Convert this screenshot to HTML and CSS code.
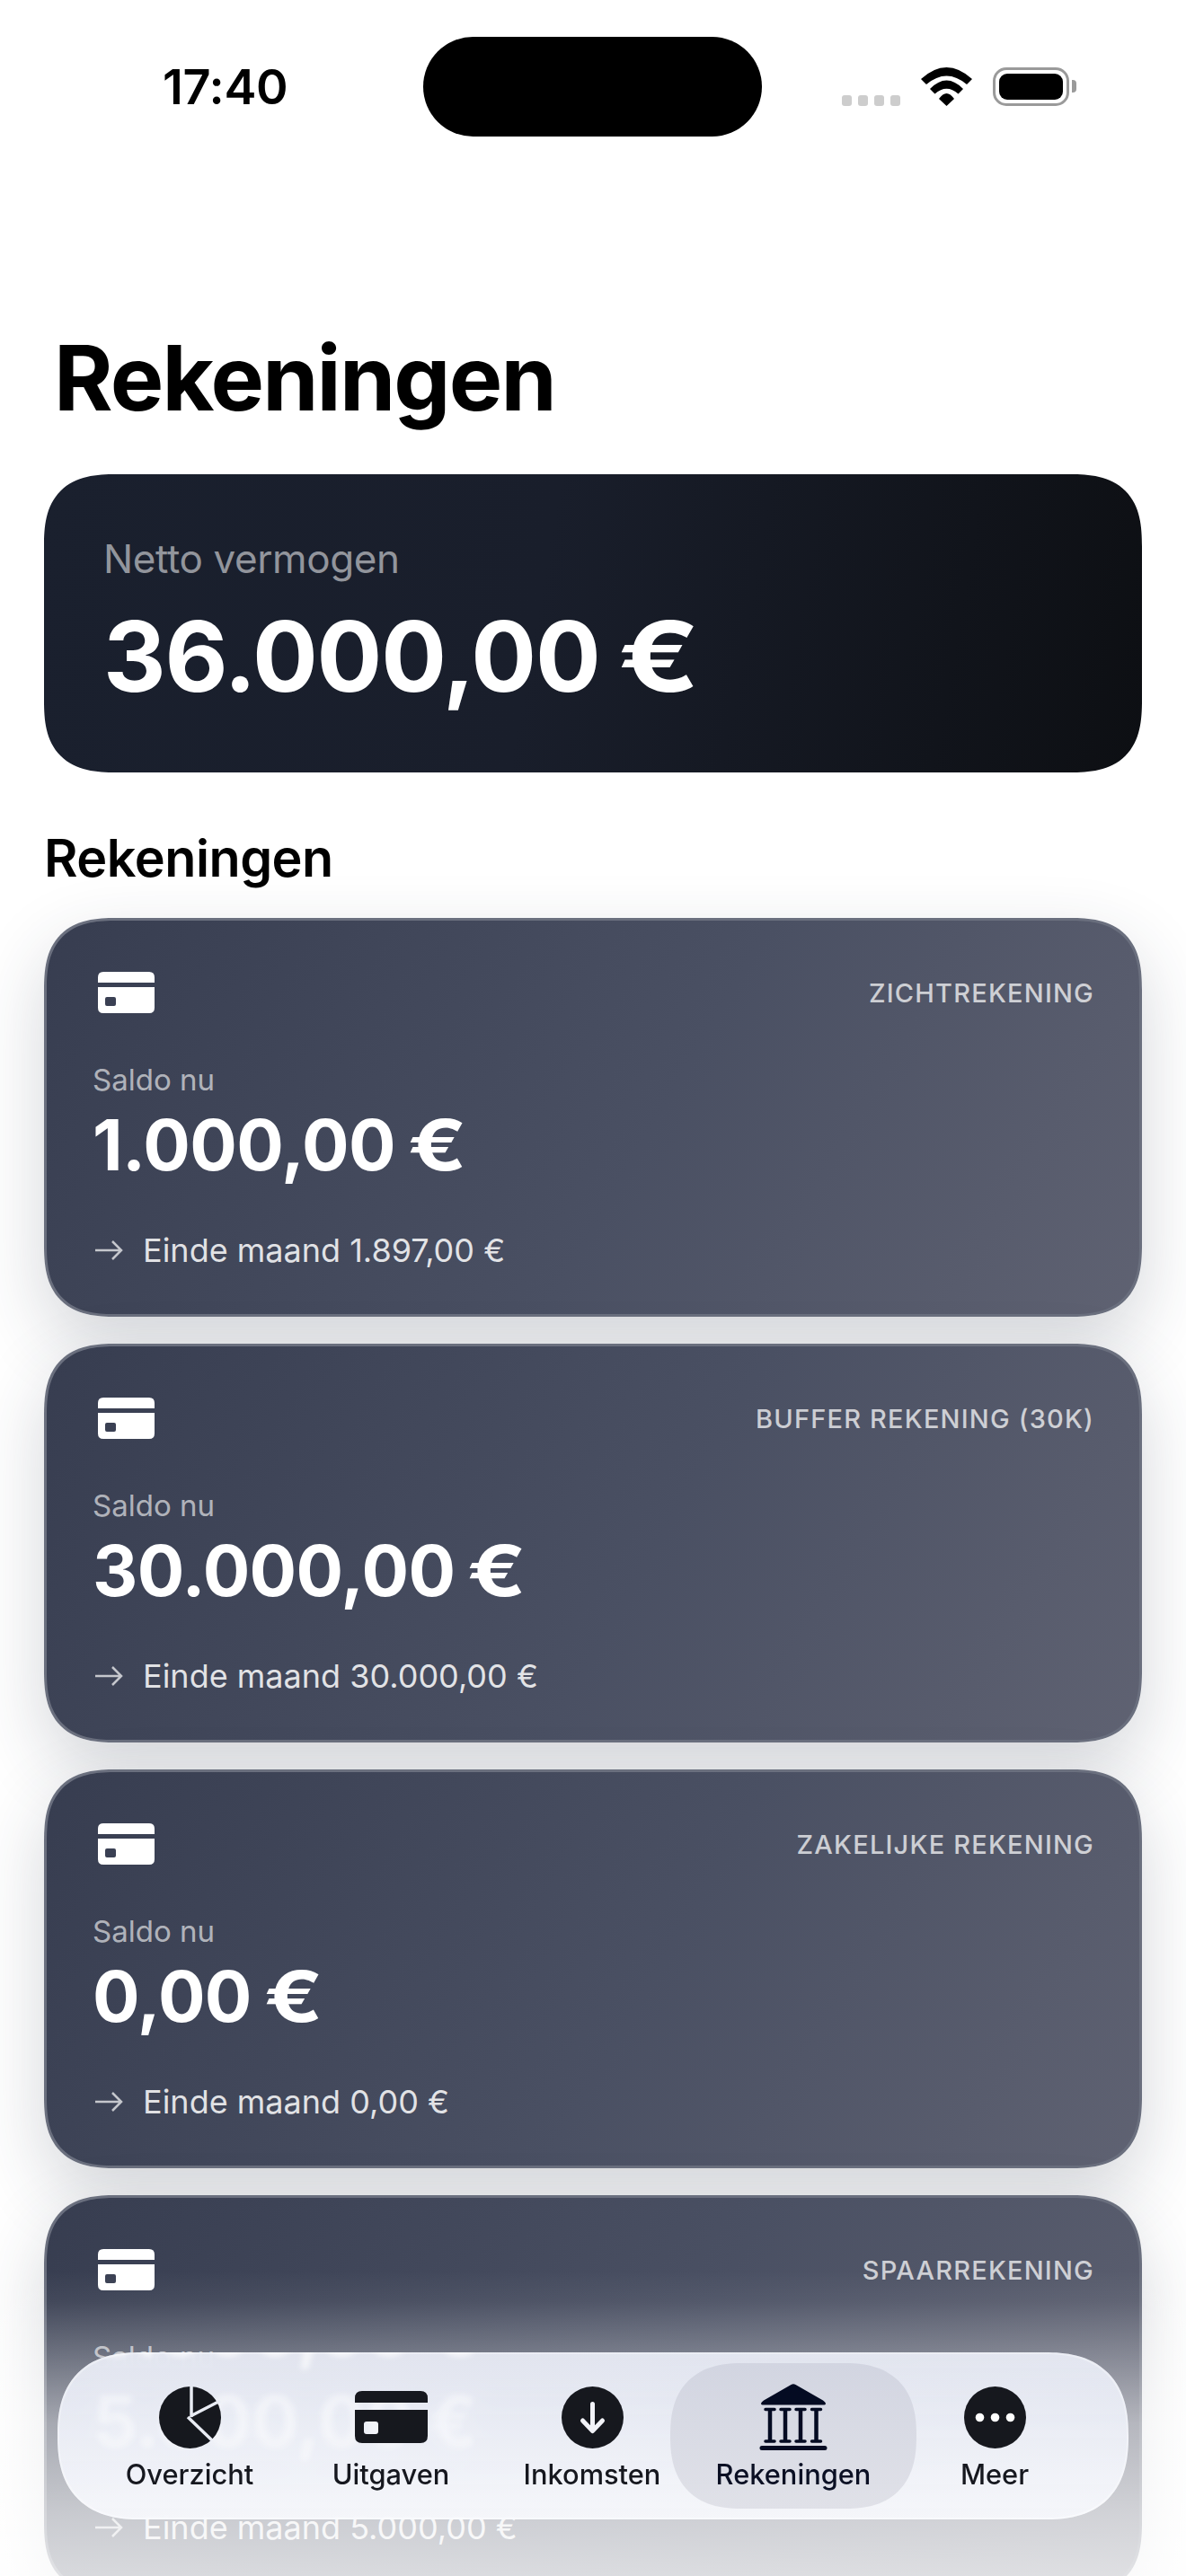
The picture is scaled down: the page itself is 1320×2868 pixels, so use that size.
FILE: index.html
```html
<!DOCTYPE html>
<html lang="nl">
<head>
<meta charset="utf-8">
<title>Rekeningen</title>
<link rel="stylesheet" href="styles.css">
</head>
<body>
<div class="phone">
  <header class="status">
    <span class="time">17:40</span>
    <span class="island"></span>
    <div class="status-icons">
      <span class="signal"><i></i><i></i><i></i><i></i></span>
      <svg class="wifi" viewBox="0 0 57 43"><path d="M0 13Q28.500-13 57 13L51 19Q28.500-0 6 19ZM10 24Q28.500 5 47 24L41.500 29.500Q28.500 18 15.500 29.500ZM20 35Q28.500 23 37 35L28.500 43Z"/></svg>
      <span class="battery"><span class="battery-fill"></span></span>
      <span class="battery-tip"></span>
    </div>
  </header>

  <main class="content">
    <h1 class="title">Rekeningen</h1>
    <section class="hero">
      <div class="hero-label">Netto vermogen</div>
      <div class="hero-amount">36.000,00 <span class="eur">€</span></div>
    </section>
    <h2 class="subtitle">Rekeningen</h2>
    <div class="cards">
      <article class="card">
        <div class="card-top">
          <svg class="card-icon" viewBox="0 0 63 46"><path fill-rule="evenodd" d="M0 12V6Q0 0 6 0H57Q63 0 63 6V12ZM0 17H63V40Q63 46 57 46H6Q0 46 0 40ZM10 28Q8 28 8 30V36Q8 38 10 38H18Q20 38 20 36V30Q20 28 18 28Z"/></svg>
          <span class="card-type">ZICHTREKENING</span>
        </div>
        <div class="saldo">Saldo nu</div>
        <div class="amount">1.000,00 <span class="eur">€</span></div>
        <div class="forecast"><svg class="arrow" viewBox="0 0 32 24"><path d="M1 12H30M20 2L30 12L20 22"/></svg>Einde maand 1.897,00 €</div>
      </article>
      <article class="card">
        <div class="card-top">
          <svg class="card-icon" viewBox="0 0 63 46"><path fill-rule="evenodd" d="M0 12V6Q0 0 6 0H57Q63 0 63 6V12ZM0 17H63V40Q63 46 57 46H6Q0 46 0 40ZM10 28Q8 28 8 30V36Q8 38 10 38H18Q20 38 20 36V30Q20 28 18 28Z"/></svg>
          <span class="card-type">BUFFER REKENING (30K)</span>
        </div>
        <div class="saldo">Saldo nu</div>
        <div class="amount">30.000,00 <span class="eur">€</span></div>
        <div class="forecast"><svg class="arrow" viewBox="0 0 32 24"><path d="M1 12H30M20 2L30 12L20 22"/></svg>Einde maand 30.000,00 €</div>
      </article>
      <article class="card">
        <div class="card-top">
          <svg class="card-icon" viewBox="0 0 63 46"><path fill-rule="evenodd" d="M0 12V6Q0 0 6 0H57Q63 0 63 6V12ZM0 17H63V40Q63 46 57 46H6Q0 46 0 40ZM10 28Q8 28 8 30V36Q8 38 10 38H18Q20 38 20 36V30Q20 28 18 28Z"/></svg>
          <span class="card-type">ZAKELIJKE REKENING</span>
        </div>
        <div class="saldo">Saldo nu</div>
        <div class="amount">0,00 <span class="eur">€</span></div>
        <div class="forecast"><svg class="arrow" viewBox="0 0 32 24"><path d="M1 12H30M20 2L30 12L20 22"/></svg>Einde maand 0,00 €</div>
      </article>
      <article class="card">
        <div class="card-top">
          <svg class="card-icon" viewBox="0 0 63 46"><path fill-rule="evenodd" d="M0 12V6Q0 0 6 0H57Q63 0 63 6V12ZM0 17H63V40Q63 46 57 46H6Q0 46 0 40ZM10 28Q8 28 8 30V36Q8 38 10 38H18Q20 38 20 36V30Q20 28 18 28Z"/></svg>
          <span class="card-type">SPAARREKENING</span>
        </div>
        <div class="saldo">Saldo nu</div>
        <div class="amount">5.000,00 <span class="eur">€</span></div>
        <div class="forecast"><svg class="arrow" viewBox="0 0 32 24"><path d="M1 12H30M20 2L30 12L20 22"/></svg>Einde maand 5.000,00 €</div>
      </article>
    </div>
  </main>

  <div class="fade"></div>

  <nav class="tabbar">
    <span class="ghost ghost-main"></span>
    <span class="ghost ghost-top"></span>
    <span class="ghost ghost-bottom"></span>
    <a class="tab">
      <span class="tab-icon">
        <svg class="ic-pie" viewBox="0 0 69 69"><circle cx="34.500" cy="34.500" r="34.500" class="ink"/><path class="cut" d="M36 0V34M35 33L68 16M32 34L59 60"/></svg>
      </span>
      <span class="tab-label">Overzicht</span>
    </a>
    <a class="tab">
      <span class="tab-icon">
        <svg class="ic-card" viewBox="0 0 81 58"><path class="ink" fill-rule="evenodd" d="M0 13V8Q0 0 8 0H73Q81 0 81 8V13ZM0 21H81V50Q81 58 73 58H8Q0 58 0 50ZM13 34Q10 34 10 37V45Q10 48 13 48H23Q26 48 26 45V37Q26 34 23 34Z"/></svg>
      </span>
      <span class="tab-label">Uitgaven</span>
    </a>
    <a class="tab">
      <span class="tab-icon">
        <svg class="ic-pie" viewBox="0 0 69 69"><circle cx="34.500" cy="34.500" r="34.500" class="ink"/><path class="glyph" d="M34.500 19.500V49M23.500 38L34.500 49.500L45.500 38"/></svg>
      </span>
      <span class="tab-label">Inkomsten</span>
    </a>
    <a class="tab tab-active">
      <span class="tab-icon">
        <svg class="ic-bank" viewBox="0 0 76 74"><path class="bank" d="M35.500 1Q38-.5 40.500 1L71 18.500Q74 20.500 74 22Q74 23.500 71 23.500H5Q2 23.500 2 22Q2 20.500 5 18.500ZM3 69H73Q75.500 69 75.500 71.500Q75.500 74 73 74H3Q.5 74 .5 71.500Q.5 69 3 69Z"/><path class="bank-stems" d="M12 28V64M29 28V64M46 28V64M63.500 28V64"/><path class="bank-caps" d="M7 28.500H17M24 28.500H34M41 28.500H51M58.500 28.500H68.500M7 64H17M24 64H34M41 64H51M58.500 64H68.500"/></svg>
      </span>
      <span class="tab-label">Rekeningen</span>
    </a>
    <a class="tab">
      <span class="tab-icon">
        <svg class="ic-pie" viewBox="0 0 69 69"><circle cx="34.500" cy="34.500" r="34.500" class="ink"/><circle cx="17.500" cy="34.500" r="4.800" fill="#fff"/><circle cx="34.500" cy="34.500" r="4.800" fill="#fff"/><circle cx="51.500" cy="34.500" r="4.800" fill="#fff"/></svg>
      </span>
      <span class="tab-label">Meer</span>
    </a>
  </nav>
</div>
</body>
</html>
```
FILE: styles.css
```css
* { box-sizing: border-box; }
html, body { margin: 0; padding: 0; background: #fff; }
body { font-family: Inter, "Liberation Sans", sans-serif; color: #000; }

.phone { position: relative; width: 1320px; height: 2868px; overflow: hidden; background: #fff; }

/* status bar */
.status { display: flex; align-items: flex-start; height: 152px; padding: 41px 122px 0 181px; }
.time { width: 291px; margin-top: 27px; font-size: 54px; line-height: 58px; font-weight: 600; letter-spacing: -0.3px; }
.island { width: 378px; height: 111px; border-radius: 56px; background: #000; }
.status-icons { display: flex; align-items: flex-start; margin-left: 89px; margin-top: 34px; }
.signal { display: flex; gap: 7px; margin-top: 31px; margin-right: 23px; }
.signal i { width: 11px; height: 12px; border-radius: 3px; background: #cdcdcd; }
.wifi { width: 57px; height: 43px; margin-right: 23px; fill: #000; }
.battery { display: block; width: 85px; height: 43px; padding: 4px; border: 3px solid #9a9a9a; border-radius: 15px; }
.battery-fill { display: block; width: 100%; height: 100%; border-radius: 9px; background: #000; }
.battery-tip { width: 5px; height: 14px; margin: 14px 0 0 3px; border-radius: 0 4px 4px 0; background: #9a9a9a; }

/* content */
.content { padding: 0 49px; }
.title { margin: 210px 0 0 11px; font-size: 100px; line-height: 118px; font-weight: 700; letter-spacing: -1.8px; }
.hero {
  height: 332px; margin-top: 48px; padding: 66px 66px 0;
  border-radius: 80px; corner-shape: superellipse(1.4);
  background: linear-gradient(100deg, #1a202e 0%, #191e2b 45%, #0d0f13 100%);
}
.hero-label { font-size: 44px; line-height: 56px; letter-spacing: -0.4px; color: #92959c; }
.hero-amount { margin-top: 20px; font-size: 108px; line-height: 122px; font-weight: 700; color: #fff; letter-spacing: -1.2px; word-spacing: -4px; }
.eur { display: inline-block; transform: scaleX(1.23); transform-origin: left center; }
.subtitle { margin: 60px 0 0 0; font-size: 57.500px; line-height: 70px; font-weight: 600; letter-spacing: -0.5px; }

.cards { display: flex; flex-direction: column; gap: 30px; margin-top: 32px; }
.card {
  height: 444px; padding: 57px 50px 0 51px;
  border: 3px solid #6a6f7e;
  border-radius: 80px; corner-shape: superellipse(1.4);
  background: linear-gradient(120deg, #373d50 0%, #4a5063 55%, #5f6272 100%);
  box-shadow: 0 30px 80px rgba(40, 48, 70, .2);
  color: #fff;
}
.card-top { display: flex; align-items: center; justify-content: space-between; height: 46px; padding-left: 6px; }
.card-icon { width: 63px; height: 46px; fill: #fff; }
.card-type { font-size: 29px; font-weight: 500; letter-spacing: 1.2px; color: rgba(255, 255, 255, .72); }
.saldo { margin-top: 54px; font-size: 33px; line-height: 40px; color: rgba(255, 255, 255, .62); }
.amount { margin-top: 7px; font-size: 78px; line-height: 92px; font-weight: 700; letter-spacing: -.6px; word-spacing: -4px; }
.forecast { display: flex; align-items: center; margin-top: 49px; font-size: 36px; line-height: 44px; color: rgba(255, 255, 255, .85); }
.arrow { width: 32px; height: 24px; margin: 0 22px 0 2px; fill: none; stroke: rgba(255, 255, 255, .7); stroke-width: 2.500; }

/* bottom fade */
.fade {
  position: absolute; left: 0; right: 0; bottom: 0; height: 340px; pointer-events: none;
  background: linear-gradient(180deg, rgba(255,255,255,0) 0%, rgba(255,255,255,.05) 10%, rgba(255,255,255,.26) 27%, rgba(255,255,255,.55) 50%, rgba(255,255,255,.72) 80%, rgba(255,255,255,.8) 100%);
}

/* tab bar */
.tabbar {
  position: absolute; left: 64px; top: 2619px; width: 1192px; height: 186px;
  display: grid; grid-template-columns: repeat(5, 1fr); padding: 12px 37px 12px 35px;
  border-radius: 93px; corner-shape: superellipse(1.3); overflow: hidden;
  background: linear-gradient(180deg, rgba(232,235,245,.94) 0%, rgba(233,236,245,.96) 30%, rgba(246,247,251,.98) 100%);
  box-shadow: inset 0 0 0 2px rgba(255,255,255,.3);
  backdrop-filter: blur(14px);
}
.ghost { position: absolute; left: 39px; font-size: 78px; line-height: 92px; font-weight: 700; color: rgba(255,255,255,.42); filter: blur(3px); white-space: nowrap; }
.ghost::before { content: "5.000,00 €"; }
.ghost-main { top: 31px; }
.ghost-top { top: -70px; color: rgba(255,255,255,.65); }
.ghost-bottom { top: 170px; color: rgba(255,255,255,.4); }
.tab { position: relative; display: flex; flex-direction: column; align-items: center; padding-top: 23px; color: #16181f; }
.tab-active { margin: 0 -25px; border-radius: 81px; corner-shape: superellipse(1.3); color: #0b1024; background: linear-gradient(180deg, #d2d5e1 0%, #e0e1e8 100%); }
.tab-icon { display: flex; align-items: center; justify-content: center; height: 74px; }
.tab-label { margin-top: 7px; font-size: 30.800px; line-height: 40px; font-weight: 500; }
.ic-pie { width: 69px; height: 69px; }
.ic-card { width: 81px; height: 58px; }
.ic-bank { width: 76px; height: 74px; }
.ink { fill: #16181e; }
.bank { fill: #040b22; }
.bank-stems { fill: none; stroke: #040b22; stroke-width: 4.500; }
.bank-caps { fill: none; stroke: #040b22; stroke-width: 3.500; stroke-linecap: round; }
.cut { fill: none; stroke: #e9ecf4; stroke-width: 3.500; }
.glyph { fill: none; stroke: #f2f3f8; stroke-width: 5; stroke-linecap: round; stroke-linejoin: round; }
```
